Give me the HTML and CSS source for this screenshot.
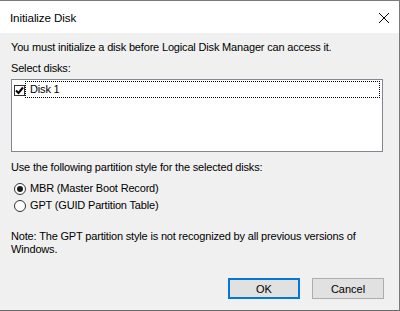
FILE: index.html
```html
<!DOCTYPE html>
<html>
<head>
<meta charset="utf-8">
<link rel="stylesheet" href="styles.css">
</head>
<body>
<div class="window">
  <div class="titlebar">
    <span class="title">Initialize Disk</span>
    <svg class="close" width="12" height="12" viewBox="0 0 12 12"><path d="M1 1 L11 11 M11 1 L1 11" stroke="#000" stroke-width="1" fill="none"/></svg>
  </div>
  <div class="content">
    <p class="line intro">You must initialize a disk before Logical Disk Manager can access it.</p>
    <p class="line select">Select disks:</p>
    <div class="listbox">
      <div class="item">
        <span class="check"><svg width="9" height="9" viewBox="0 0 9 9"><path d="M1 4.5 L3.5 7 L8 1.5" stroke="#000" stroke-width="2" fill="none"/></svg></span>
        <span class="focus">Disk 1</span>
      </div>
    </div>
    <p class="line style">Use the following partition style for the selected disks:</p>
    <div class="radios">
      <div class="radio"><span class="circle on"></span><span>MBR (Master Boot Record)</span></div>
      <div class="radio"><span class="circle"></span><span>GPT (GUID Partition Table)</span></div>
    </div>
    <p class="line note">Note: The GPT partition style is not recognized by all previous versions of Windows.</p>
    <div class="buttons">
      <button class="btn default">OK</button>
      <button class="btn">Cancel</button>
    </div>
  </div>
</div>
</body>
</html>
```
FILE: styles.css
```css
html, body {
  margin: 0;
  padding: 0;
  background: #f0f0f0;
}
body {
  width: 400px;
  height: 311px;
  overflow: hidden;
  font-family: "Liberation Sans", Arial, sans-serif;
  font-size: 11px;
  line-height: 13px;
  letter-spacing: -0.17px;
  color: #000;
}
.window {
  box-sizing: border-box;
  width: 400px;
  height: 311px;
  border-top: 1px solid #7a7a7a;
  border-right: 1px solid #7a7a7a;
  border-bottom: 1px solid #6a6a6a;
  background: #f0f0f0;
  display: flex;
  flex-direction: column;
}
.titlebar {
  height: 32px;
  background: #fff;
  display: flex;
  align-items: center;
  justify-content: space-between;
  padding: 0 9px 0 10px;
  flex: none;
}
.title {
  font-size: 11.6px;
  letter-spacing: -0.1px;
}
.close {
  display: block;
  margin-top: 1px;
}
.content {
  flex: 1;
  padding: 8px 0 0 11px;
  display: flex;
  flex-direction: column;
}
.line {
  margin: 0;
}
.select {
  margin-top: 8px;
}
.listbox {
  margin-top: 4px;
  width: 372px;
  height: 73px;
  box-sizing: border-box;
  border: 1px solid #828790;
  background: #fff;
  padding: 0 2px 0 2px;
}
.item {
  display: flex;
  align-items: center;
  height: 17px;
}
.check {
  box-sizing: border-box;
  width: 11px;
  height: 11px;
  border: 1px solid #333;
  background: #fff;
  display: flex;
  align-items: center;
  justify-content: center;
  margin-top: 3px;
  flex: none;
}
.check svg { display: block; }
.focus {
  flex: 1;
  height: 17px;
  box-sizing: border-box;
  border: 1px dotted #000;
  padding: 1px 0 0 4px;
  margin-top: 1px;
}
.style {
  margin-top: 9px;
}
.radios {
  margin-top: 8px;
  display: flex;
  flex-direction: column;
  gap: 4px;
}
.radio {
  display: flex;
  align-items: center;
  gap: 4px;
  height: 13px;
  padding-left: 3px;
}
.circle {
  box-sizing: border-box;
  width: 12px;
  height: 12px;
  border: 1px solid #333;
  border-radius: 50%;
  background: #fff;
  position: relative;
  flex: none;
}
.circle.on::after {
  content: "";
  position: absolute;
  left: 2px;
  top: 2px;
  width: 6px;
  height: 6px;
  border-radius: 50%;
  background: #1a1a1a;
}
.note {
  margin-top: 18px;
  width: 380px;
}
.buttons {
  margin-top: 22px;
  display: flex;
  justify-content: flex-end;
  gap: 12px;
  padding-right: 15px;
}
.btn {
  box-sizing: border-box;
  width: 72px;
  height: 21px;
  background: #e1e1e1;
  border: 1px solid #adadad;
  font-family: "Liberation Sans", Arial, sans-serif;
  font-size: 11px;
  color: #000;
  padding: 0;
  margin: 0;
}
.btn.default {
  border: 2px solid #0078d7;
}
```
